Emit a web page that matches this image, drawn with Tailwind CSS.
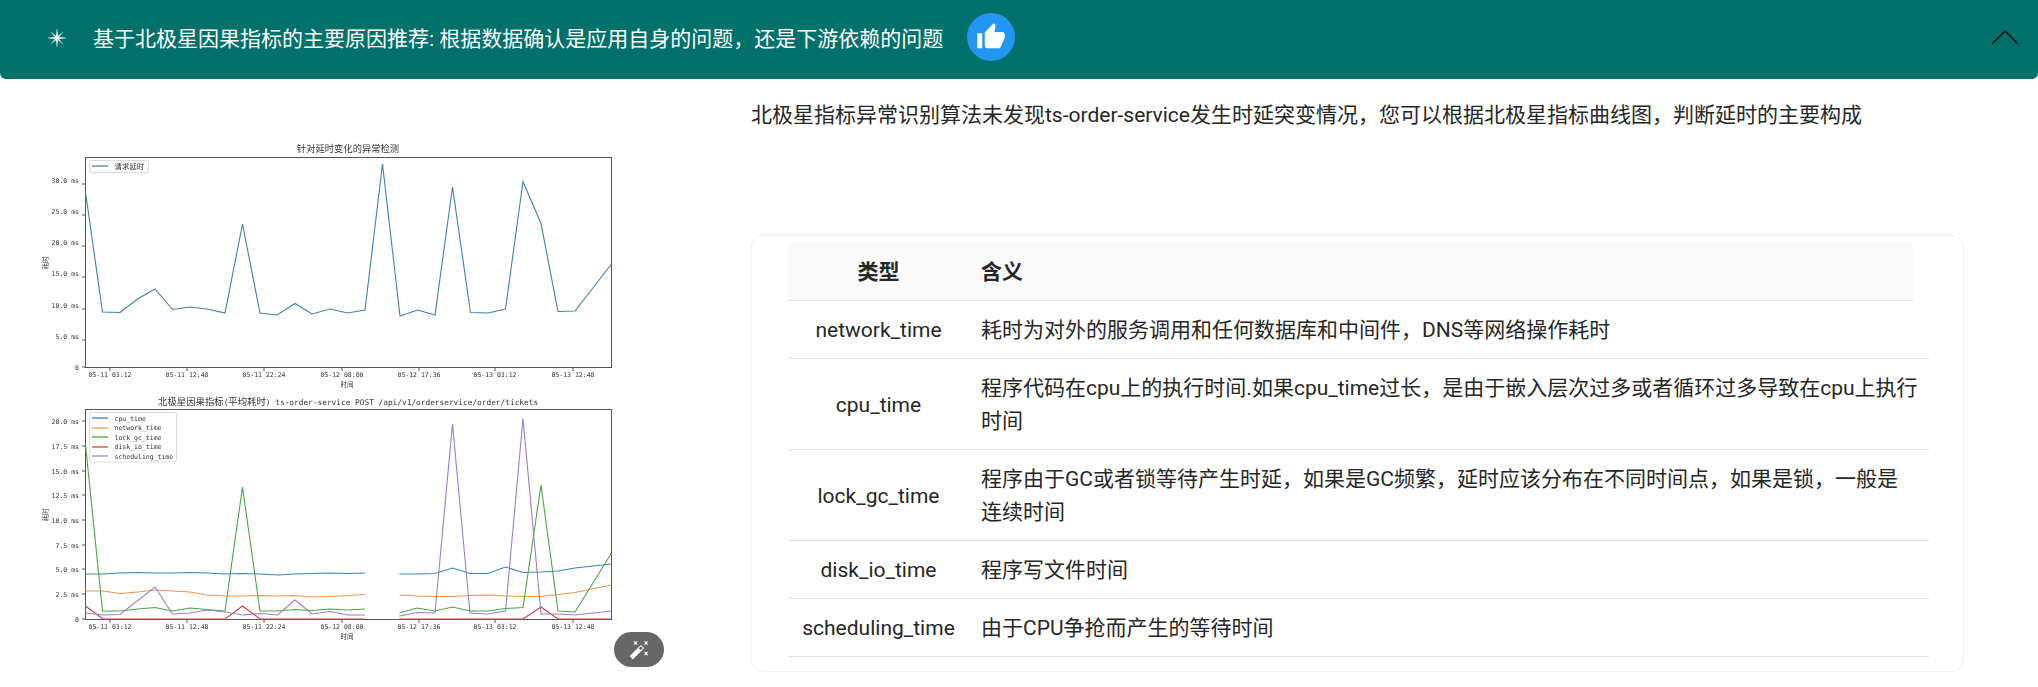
<!DOCTYPE html>
<html lang="zh">
  <head>
    <meta charset="UTF-8" />
    <script src="https://cdn.jsdelivr.net/npm/@tailwindcss/browser@4"></script>
    <title>北极星因果指标</title>
  </head>
  <body class="bg-white overflow-hidden font-['Roboto','Noto_Sans_CJK_SC',sans-serif] text-[#262626]">
    <div class="h-[79px] flex items-center bg-[#02706b] rounded-b-[6px] pl-[48px] pr-[19px] text-white text-[21px]">
      <svg class="w-[18px] h-[18px] mr-[27px] -translate-y-[2px]" viewBox="0 0 20 20" fill="white" stroke="white" stroke-width="0.300"><path d="M10 0 11 8 16.500 3.500 12 9 20 10 12 11 16.500 16.500 11 12 10 20 9 12 3.500 16.500 8 11 0 10 8 9 3.500 3.500 9 8Z" /></svg>
      <span>基于北极星因果指标的主要原因推荐: 根据数据确认是应用自身的问题，还是下游依赖的问题</span>
      <div class="ml-[24px] w-[48px] h-[48px] -translate-y-[3px] rounded-full bg-[#2196f3] flex items-center justify-center">
        <svg class="w-[30px] h-[30px]" viewBox="0 0 24 24" fill="white"><path d="M1 21h4V9H1v12zm22-11c0-1.100-.9-2-2-2h-6.310l.95-4.570.03-.32c0-.41-.17-.79-.44-1.060L14.170 1 7.590 7.590C7.220 7.950 7 8.450 7 9v10c0 1.100.9 2 2 2h9c.83 0 1.540-.5 1.840-1.220l3.020-7.050c.09-.23.140-.47.140-.73v-2z" /></svg>
      </div>
      <svg class="ml-auto w-[28px] h-[15px] -translate-y-[2px]" viewBox="0 0 28 15" fill="none" stroke="#0a0a0a" stroke-width="1.500"><path d="M1 14 14 1 27 14" /></svg>
    </div>

    <div class="flex h-[608px]">
      <div class="relative w-[751px] shrink-0">
        <!-- charts: page coords minus the 79px header -->
        <svg class="block blur-[0.35px]" width="751" height="608" viewBox="0 79 751 608" font-family="'DejaVu Sans Mono','Noto Sans CJK SC',monospace" font-size="6.500" fill="#333">
          <text x="348" y="152" text-anchor="middle" font-size="9.300">针对延时变化的异常检测</text>
          <rect x="85.500" y="157.500" width="526" height="210" fill="none" stroke="#555" />
          <path stroke="#555" d="M82 184h3M82 215h3M82 246h3M82 277h3M82 309h3M82 340h3M82 367h3M110 368v3M187 368v3M264 368v3M342 368v3M419 368v3M495 368v3M573 368v3" />
          <g text-anchor="end">
            <text x="79" y="183">30.0 ms</text><text x="79" y="214">25.0 ms</text><text x="79" y="245">20.0 ms</text><text x="79" y="276">15.0 ms</text><text x="79" y="308">10.0 ms</text><text x="79" y="339">5.0 ms</text><text x="79" y="370">0</text>
          </g>
          <text x="48" y="263" text-anchor="middle" transform="rotate(-90 48 263)">耗时</text>
          <g text-anchor="middle">
            <text x="110" y="377">05-11 03:12</text><text x="187" y="377">05-11 12:48</text><text x="264" y="377">05-11 22:24</text><text x="342" y="377">05-12 08:00</text><text x="419" y="377">05-12 17:36</text><text x="495" y="377">05-13 03:12</text><text x="573" y="377">05-13 12:48</text><text x="347" y="387">时间</text>
          </g>
          <rect x="89.500" y="160.500" width="59" height="12" rx="1.500" fill="white" stroke="#ddd" />
          <path d="M92 166h16" stroke="#5b93b8" stroke-width="1.500" />
          <text x="114.500" y="169" font-size="7.400">请求延时</text>
          <polyline fill="none" stroke="#3f81ad" stroke-width="1.100" points="85.500,192 102.500,312 120,312.500 137.500,299 155,289 172.500,309.500 190,307 207,309 225,313 242.500,224 260,313 277,315 295,303.500 312,314 330,309 347.500,313 365,310 382.500,164 400,316 417.500,310 435,315 452.500,187 470.500,312.500 488,313 505.500,309 523,181.500 541,223.500 558,311.500 575,311 611.500,264" />

          <text x="158" y="405" font-size="9.400">北极星因果指标<tspan font-size="7.800">(</tspan>平均耗时<tspan font-size="7.800">) ts-order-service POST /api/v1/orderservice/order/tickets</tspan></text>
          <rect x="85.500" y="409.500" width="526" height="210" fill="none" stroke="#555" />
          <path stroke="#555" d="M82 421h3M82 446h3M82 471h3M82 495h3M82 520h3M82 545h3M82 569h3M82 594h3M82 619h3M110 620v3M187 620v3M264 620v3M342 620v3M419 620v3M495 620v3M573 620v3" />
          <g text-anchor="end">
            <text x="79" y="423.500">20.0 ms</text><text x="79" y="448.500">17.5 ms</text><text x="79" y="473.500">15.0 ms</text><text x="79" y="497.500">12.5 ms</text><text x="79" y="522.500">10.0 ms</text><text x="79" y="547.500">7.5 ms</text><text x="79" y="571.500">5.0 ms</text><text x="79" y="596.500">2.5 ms</text><text x="79" y="621.500">0</text>
          </g>
          <text x="48" y="515" text-anchor="middle" transform="rotate(-90 48 515)">耗时</text>
          <g text-anchor="middle">
            <text x="110" y="629">05-11 03:12</text><text x="187" y="629">05-11 12:48</text><text x="264" y="629">05-11 22:24</text><text x="342" y="629">05-12 08:00</text><text x="419" y="629">05-12 17:36</text><text x="495" y="629">05-13 03:12</text><text x="573" y="629">05-13 12:48</text><text x="347" y="639">时间</text>
          </g>
          <rect x="89.500" y="412.500" width="87" height="49.500" rx="1.500" fill="white" stroke="#ddd" />
          <path d="M92 418h16" stroke="#5b93b8" stroke-width="1.500" /><text x="114.500" y="420.500">cpu_time</text>
          <path d="M92 428h16" stroke="#f4a35c" stroke-width="1.500" /><text x="114.500" y="430">network_time</text>
          <path d="M92 437h16" stroke="#62b162" stroke-width="1.500" /><text x="114.500" y="439.500">lock_gc_time</text>
          <path d="M92 447h16" stroke="#d35c5c" stroke-width="1.500" /><text x="114.500" y="449">disk_io_time</text>
          <path d="M92 456h16" stroke="#b194cf" stroke-width="1.500" /><text x="114.500" y="458.500">scheduling_time</text>
          <g fill="none" stroke-width="1.100">
            <path stroke="#3d85b5" d="M85.500 574 103 574 120 573 138 572.500 155 573 172.500 573 190 572.500 207 573 225 574 242.500 573.500 260 574 277.500 575 295 574 312 573.500 330 573 347.500 573.500 365 573M399.500 574 417 574 435 573.500 452.500 568 470 573.500 487.500 573.500 505.500 567 523 572.500 541 572 558 571 575 568 611.500 564" />
            <path stroke="#f0954a" d="M85.500 591 103 591 120 593.500 138 592 155 590 172.500 591 190 592 207 595 225 596 242.500 596 260 595.500 277.500 596 295 595.500 312 597 330 596.500 347.500 595.500 365 594.500M399.500 595 417 596 435 596.500 452.500 596.500 470 595.500 487.500 595 505.500 596 523 596.500 541 596.500 558 594.500 575 592.500 611.500 585" />
            <path stroke="#4aa64a" d="M85.500 445 102.500 611 120 611 138 609 155 607.500 172.500 611 190 608 207 609.500 225 611 242.500 487 260 611 277.500 611 295 609.500 312 610.500 330 609 347.500 610 365 609M399.500 613 417 608 435 611 452.500 607 470 611 487.500 611 505.500 608.500 523 607.500 541 485 558 611 575 612 611.500 553" />
            <path stroke="#c94040" d="M85.500 606 103 619 225 619 242.500 606 260 619 365 619M399.500 619 523 619 541 607 558 619 611.500 619" />
            <path stroke="#a07cc5" d="M85.500 613 103 615 120 614.500 155 587 172.500 614 190 613 207 610 225 612 242.500 615 260 613.500 277.500 615 295 600 312 614 330 611.500 347.500 615 365 615M399.500 616 417 612.500 435 613 452.500 424 470 613 487.500 614 505.500 611 523 418.500 541 614 558 614 575 615 611.500 611" />
          </g>
        </svg>
        <div class="absolute left-[614px] top-[553px] w-[50px] h-[35px] rounded-full bg-[#666] flex items-center justify-center">
          <svg class="w-[21px] h-[21px]" viewBox="0 0 24 24" fill="white"><path d="M7.500 5.600 10 7 8.600 4.500 10 2 7.500 3.400 5 2l1.400 2.500L5 7zm12 9.800L17 14l1.400 2.500L17 19l2.500-1.400L22 19l-1.400-2.500L22 14zM22 2l-2.500 1.400L17 2l1.400 2.500L17 7l2.500-1.400L22 7l-1.400-2.500zm-7.630 5.290a.996.996 0 0 0-1.410 0L1.290 18.960a.996.996 0 0 0 0 1.410l2.340 2.340c.39.39 1.020.39 1.410 0L16.700 11.050a.996.996 0 0 0 0-1.410l-2.330-2.350zm-1.030 5.490-2.120-2.120 2.440-2.440 2.120 2.120-2.440 2.440z" /></svg>
        </div>
      </div>

      <div class="w-[1213px] shrink-0">
        <p class="text-[21px] leading-[33px] pt-[20px] whitespace-nowrap">北极星指标异常识别算法未发现ts-order-service发生时延突变情况，您可以根据北极星指标曲线图，判断延时的主要构成</p>
        <div class="mt-[103px] h-[437px] border border-[#f0f0f0] rounded-[12px] pt-[7px] pl-[36px] pr-[34px]">
          <table class="w-full table-fixed border-collapse text-[21px] leading-[33px]">
            <thead>
              <tr>
                <th class="w-[181px] pt-[13px] pb-[11px] font-bold text-center bg-[#fafafa] border-b border-[#e3e3e3]">类型</th>
                <th class="px-[12px] pt-[13px] pb-[11px] font-bold text-left bg-[#fafafa] border-b border-[#e3e3e3]">含义</th>
                <th class="w-[16px]"></th>
              </tr>
            </thead>
            <tbody>
              <tr class="border-b border-[#e3e3e3]"><td class="pt-[13px] pb-[11px] text-center">network_time</td><td colspan="2" class="px-[12px] pt-[13px] pb-[11px]">耗时为对外的服务调用和任何数据库和中间件，DNS等网络操作耗时</td></tr>
              <tr class="border-b border-[#e3e3e3]"><td class="pt-[13px] pb-[11px] text-center">cpu_time</td><td colspan="2" class="pl-[12px] pt-[13px] pb-[11px] whitespace-nowrap">程序代码在cpu上的执行时间.如果cpu_time过长，是由于嵌入层次过多或者循环过多导致在cpu上执行<br />时间</td></tr>
              <tr class="border-b border-[#e3e3e3]"><td class="pt-[13px] pb-[11px] text-center">lock_gc_time</td><td colspan="2" class="px-[12px] pt-[13px] pb-[11px]">程序由于GC或者锁等待产生时延，如果是GC频繁，延时应该分布在不同时间点，如果是锁，一般是连续时间</td></tr>
              <tr class="border-b border-[#e3e3e3]"><td class="pt-[13px] pb-[11px] text-center">disk_io_time</td><td colspan="2" class="px-[12px] pt-[13px] pb-[11px]">程序写文件时间</td></tr>
              <tr class="border-b border-[#e3e3e3]"><td class="pt-[13px] pb-[11px] text-center">scheduling_time</td><td colspan="2" class="px-[12px] pt-[13px] pb-[11px]">由于CPU争抢而产生的等待时间</td></tr>
            </tbody>
          </table>
        </div>
      </div>
    </div>
  </body>
</html>
